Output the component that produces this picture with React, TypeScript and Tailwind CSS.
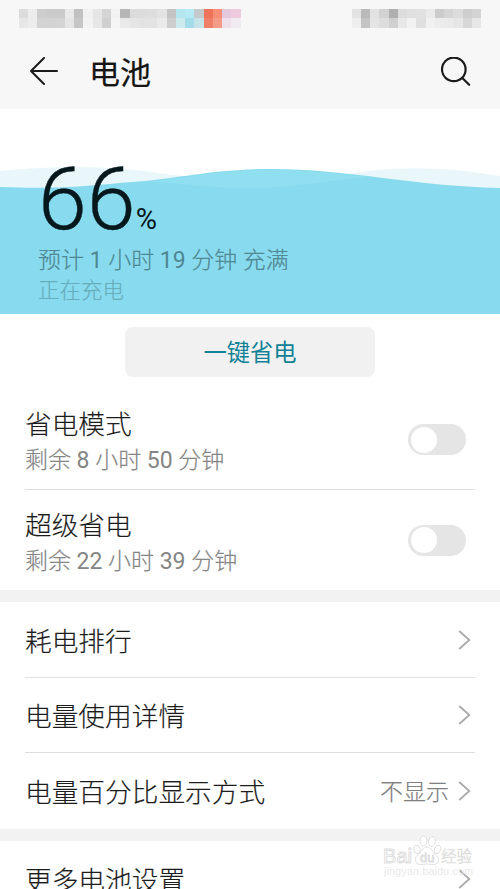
import type { ReactNode } from "react";

const statusLeft = [
  ["#dcdcdc", "#ececec", "#cdcdcd", "#cbcbcb", "#cbcbcb", "#e9e9e9", "#c1c1c1", "#f1f1f1", "#e5e5e5", "#d5d5d5", "#f2f2f2", "#b6b6b6", "#dcdcdc", "#dcdcdc", "#dddddd", "#e2e2e2", "#c4c4c4", "#b3e6ee", "#b4eaf3", "#c3c9cb", "#ed735a", "#f78f78", "#e4c9dc", "#edcbdd"],
  ["#e7e7e7", "#ececec", "#d3d3d3", "#d3d3d3", "#d4d4d4", "#e5e5e5", "#c6c6c6", "#f3f3f3", "#e6e6e6", "#d0d0d0", "#f5f5f5", "#eaeaea", "#e5e5e5", "#e3e3e3", "#e3e3e3", "#eaeaea", "#cdcdcd", "#cdebef", "#a5dcea", "#c7e3ea", "#ee8069", "#f39b87", "#eedfeb", "#f1eaf0"],
];

const statusRight = [
  ["#e3e3e3", "#bababa", "#e2e2e2", "#d2d2d2", "#afafaf", "#dcdcdc", "#e0e0e0", "#e1e1e1", "#eaeaea", "#cccccc", "#d5d5d5", "#dcdcdc", "#cecece", "#d3d3d3"],
  ["#eeeeee", "#c4c4c4", "#e5e5e5", "#dddddd", "#d0d0d0", "#e8e8e8", "#f2f2f2", "#e0e0e0", "#f1f1f1", "#ececec", "#ebebeb", "#e6e6e6", "#d7d7d7", "#e7e7e7"],
];

const Mosaic = ({ rows }: { rows: string[][] }) => (
  <div>
    {rows.map((row, i) => (
      <div key={i} className="flex">
        {row.map((color, j) => (
          <span key={j} className="h-[9.25px] w-[9.25px]" style={{ backgroundColor: color }} />
        ))}
      </div>
    ))}
  </div>
);

// digits are set a step heavier than the Chinese text around them
const Note = ({ text }: { text: string }) => (
  <>
    {text.split(/(\d+)/).map((part, i) =>
      /\d/.test(part) ? <span key={i} className="font-normal [-webkit-text-stroke:0]">{part}</span> : part
    )}
  </>
);

const Chevron = () => (
  <svg className="mt-px" width="13" height="20" viewBox="0 0 13 20" fill="none" stroke="#aaaaaa" strokeWidth="1.8">
    <path d="M1.2 1 L11.3 10 L1.2 19" />
  </svg>
);

const Toggle = () => (
  <div className="flex h-[31px] w-[58px] items-center rounded-full bg-[#e5e5e5] px-[2.5px]">
    <span className="size-[26px] rounded-full bg-white" />
  </div>
);

const SwitchRow = ({ title, note }: { title: string; note: string }) => (
  <div className="flex h-[100px] items-center justify-between pr-[9px]">
    <div className="pt-[7px]">
      <div className="text-[26.7px] leading-[36px] text-[#1c1c1c] [-webkit-text-stroke:0.15px_#1c1c1c]">{title}</div>
      <div className="text-[23px] leading-[36px] text-[#858585] [-webkit-text-stroke:0.2px_#858585]">
        <Note text={note} />
      </div>
    </div>
    <Toggle />
  </div>
);

const LinkRow = ({ title, value }: { title: string; value?: string }) => (
  <div className="flex h-[75.5px] items-center pr-1">
    <span className="flex-1 pt-[5px] text-[26.7px] leading-[36px] text-[#1c1c1c] [-webkit-text-stroke:0.15px_#1c1c1c]">{title}</span>
    {value && <span className="mr-[9px] pt-[5px] text-[23px] text-[#808080] [-webkit-text-stroke:0.2px_#808080]">{value}</span>}
    <Chevron />
  </div>
);

const Group = ({ children }: { children: ReactNode }) => (
  <div className="divide-y divide-[#dedede] px-[25px]">{children}</div>
);

const Watermark = () => (
  <div className="absolute top-[834px] left-[383px] w-[92px]">
    <svg width="92" height="46" viewBox="0 0 92 46" fill="#ffffff" stroke="#dcdcdc" strokeWidth="0.9">
      <text x="0" y="29" fontFamily="Liberation Sans" fontSize="20" textLength="29">Bai</text>
      <ellipse cx="34" cy="15.5" rx="3" ry="4.3" transform="rotate(-15 34 15.5)" />
      <ellipse cx="40.5" cy="7" rx="3.4" ry="5" />
      <ellipse cx="49" cy="7.5" rx="3.4" ry="5" transform="rotate(12 49 7.5)" />
      <ellipse cx="54.5" cy="15.5" rx="3" ry="4.3" transform="rotate(20 54.5 15.5)" />
      <path d="M44 13c-4 0-5 4-8 7-3 2-5 5-3 8 2 4 7 2 11 2s9 2 11-2c2-3-1-6-3-8-3-3-4-7-8-7z" />
      <text x="37" y="28" fontFamily="Liberation Sans" fontSize="13">du</text>
      <text x="58" y="28" fontFamily="Noto Sans CJK SC" fontSize="15.5" strokeWidth="0.6">经验</text>
      <text x="1" y="41" fontFamily="Liberation Sans" fontSize="10.5" fill="#e9e9e9" stroke="none" textLength="89">jingyan.baidu.com</text>
    </svg>
  </div>
);

const App = () => {
  return (
    <div className="relative h-[889px] w-[500px] overflow-hidden bg-white font-[Roboto,'Noto_Sans_CJK_SC',sans-serif] font-light">
      <header className="h-[109px] bg-[#f7f7f7] pt-[9px]">
        <div className="flex justify-between pr-[19px] pl-[18.5px]">
          <Mosaic rows={statusLeft} />
          <Mosaic rows={statusRight} />
        </div>
        <div className="flex h-[88px] items-center pr-[29px] pl-[29px]">
          <svg width="30" height="30" viewBox="0 0 30 30" fill="none" stroke="#1b1b1b" strokeWidth="2" strokeLinecap="round" strokeLinejoin="round">
            <path d="M28 14H2M15 1L2 14L15 27" />
          </svg>
          <h1 className="ml-[30px] flex-1 pt-[5px] text-[31px] leading-[40px] font-normal text-[#151515] [-webkit-text-stroke:0.2px_#151515]">电池</h1>
          <svg width="30" height="30" viewBox="0 0 30 30" fill="none" stroke="#1b1b1b" strokeWidth="2.2" strokeLinecap="round">
            <circle cx="12.8" cy="12.4" r="11.8" />
            <path d="M21.3 21L28.2 27.8" />
          </svg>
        </div>
      </header>

      <section className="relative h-[205px]">
        <svg className="absolute inset-0" width="500" height="205" viewBox="0 0 500 205">
          <path d="M0 62C45 58 90 56 135 61C210 70 260 80 330 69C385 56 440 57 500 67V100H0Z" fill="#e9f7fa" />
          <path d="M0 78C70 81 100 75 145 72C190 67 220 60 270 60C350 60 410 77 500 79V205H0Z" fill="#88dbee" />
          <path d="M150 73C190 68 220 61 270 61C310 61 340 65 370 68C330 71 290 79 250 79C210 79 180 74 150 73Z" fill="#90dff0" />
        </svg>
        <div className="relative pt-[43px] pl-[38px]">
          <div className="flex h-[94px] items-baseline">
            <span className="text-[88px] leading-[94px] text-[#06181c] [-webkit-text-stroke:0.4px_#06181c]">66</span>
            <span className="text-[29px] font-normal text-[#06181c]">%</span>
          </div>
          <div className="text-[23px] leading-[30px] text-[#4f8793] [-webkit-text-stroke:0.2px_#4f8793]">
            <Note text="预计 1 小时 19 分钟 充满" />
          </div>
          <div className="text-[21.5px] leading-[30px] text-[#67aebd] [-webkit-text-stroke:0.2px_#67aebd]">正在充电</div>
        </div>
      </section>

      <div className="flex h-[76px] justify-center pt-[13px]">
        <button className="h-[50px] w-[250px] rounded-lg bg-[#f1f1f1] pt-[3px] text-[23.3px] font-normal text-[#128296]">一键省电</button>
      </div>

      <Group>
        <SwitchRow title="省电模式" note="剩余 8 小时 50 分钟" />
        <SwitchRow title="超级省电" note="剩余 22 小时 39 分钟" />
      </Group>
      <div className="h-3 bg-[#f2f2f2]" />
      <Group>
        <LinkRow title="耗电排行" />
        <LinkRow title="电量使用详情" />
        <LinkRow title="电量百分比显示方式" value="不显示" />
      </Group>
      <div className="h-3 bg-[#f2f2f2]" />
      <Group>
        <LinkRow title="更多电池设置" />
      </Group>
      <Watermark />
    </div>
  );
};

export default App;
